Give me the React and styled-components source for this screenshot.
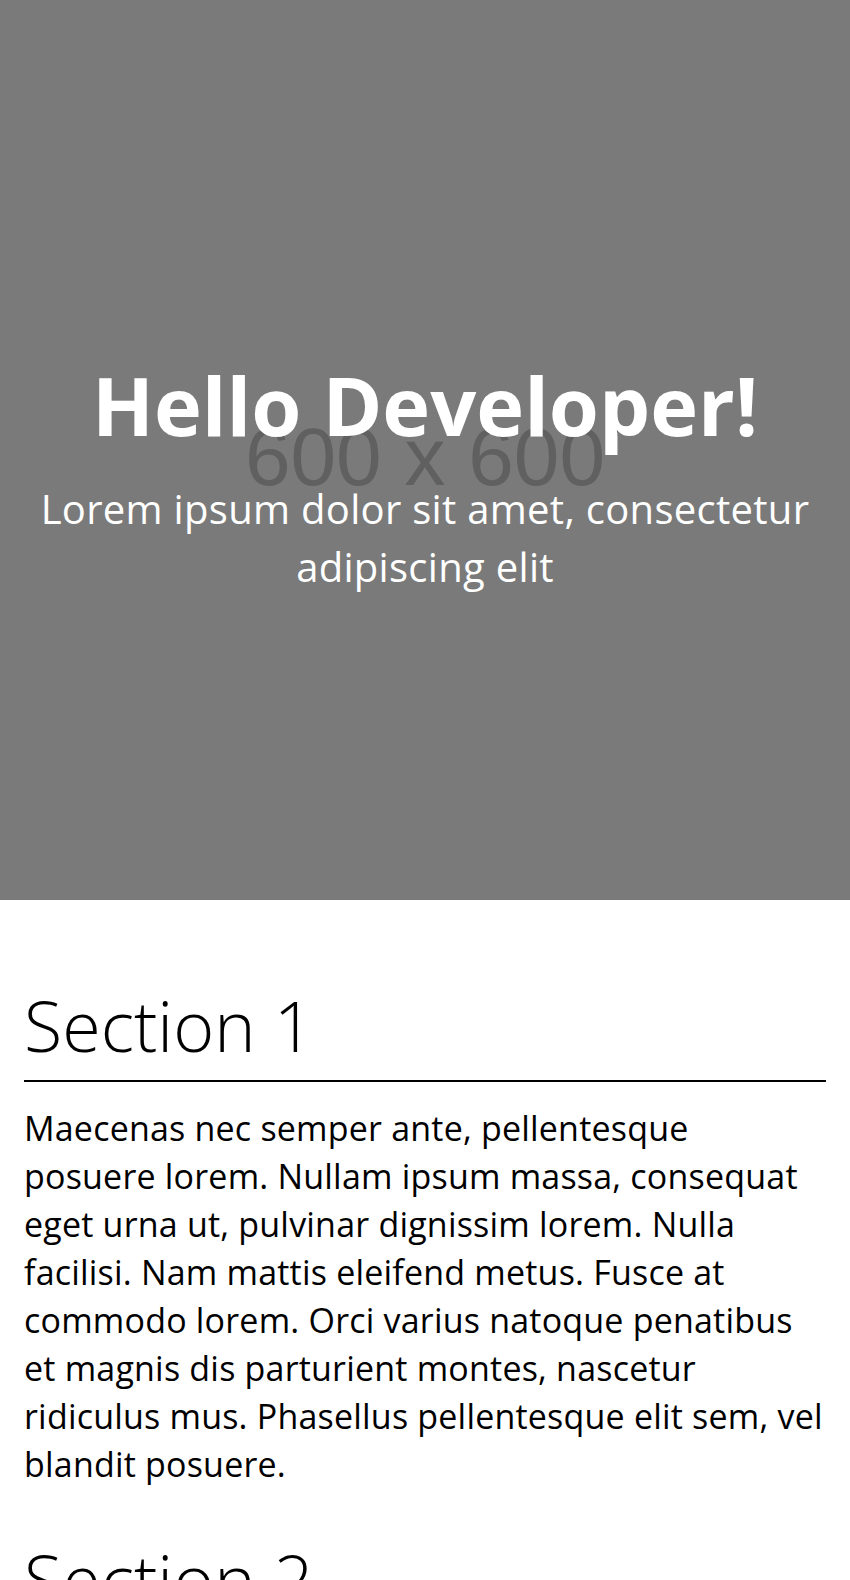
import React from 'react';
import styled, { createGlobalStyle } from 'styled-components';

const GlobalStyle = createGlobalStyle`
  body {
    margin: 0;
    font-family: "Open Sans", "Noto Sans", sans-serif;
    color: #000;
    background: #fff;
  }
`;

const Hero = styled.header`
  display: grid;
  place-items: center;
  height: 900px;
  background-color: #7a7a7a;
`;

// the grey placeholder picture behind the hero text
const Placeholder = styled.span`
  grid-area: 1 / 1;
  margin-top: 14px;
  color: #606060;
  font-family: "Liberation Sans", Arial, sans-serif;
  font-size: 82px;
  line-height: 1;
`;

const HeroContent = styled.div`
  grid-area: 1 / 1;
  padding: 0 24px;
  margin-top: 53px;
  text-align: center;
  color: #fff;
`;

const Title = styled.h1`
  margin: 0;
  font-size: 81px;
  font-weight: 700;
  line-height: 96px;
`;

const Subtitle = styled.p`
  margin: 27px 0 0;
  font-size: 40px;
  line-height: 58px;
  letter-spacing: 0.3px;
`;

const Main = styled.main`
  display: flex;
  flex-direction: column;
  gap: 46px;
  padding: 80px 24px;
`;

const Heading = styled.h2`
  margin: 0;
  padding-bottom: 10px;
  border-bottom: 2px solid #000;
  font-size: 70px;
  font-weight: 300;
  line-height: 90px;
`;

const Text = styled.p`
  margin: 22px 0 0;
  font-size: 34px;
  line-height: 48px;
  letter-spacing: 0.2px;
`;

const sections = [
  {
    title: 'Section 1',
    text: 'Maecenas nec semper ante, pellentesque posuere lorem. Nullam ipsum massa, consequat eget urna ut, pulvinar dignissim lorem. Nulla facilisi. Nam mattis eleifend metus. Fusce at commodo lorem. Orci varius natoque penatibus et magnis dis parturient montes, nascetur ridiculus mus. Phasellus pellentesque elit sem, vel blandit posuere.',
  },
  {
    title: 'Section 2',
    text: 'Maecenas nec semper ante, pellentesque posuere lorem. Nullam ipsum massa, consequat eget urna ut, pulvinar dignissim lorem. Nulla facilisi.',
  },
];

const App = () => {
  return (
    <>
      <GlobalStyle />
      <Hero>
        <Placeholder>600 x 600</Placeholder>
        <HeroContent>
          <Title>Hello Developer!</Title>
          <Subtitle>Lorem ipsum dolor sit amet, consectetur adipiscing elit</Subtitle>
        </HeroContent>
      </Hero>
      <Main>
        {sections.map((s) => (
          <section key={s.title}>
            <Heading>{s.title}</Heading>
            <Text>{s.text}</Text>
          </section>
        ))}
      </Main>
    </>
  );
};

export default App;
